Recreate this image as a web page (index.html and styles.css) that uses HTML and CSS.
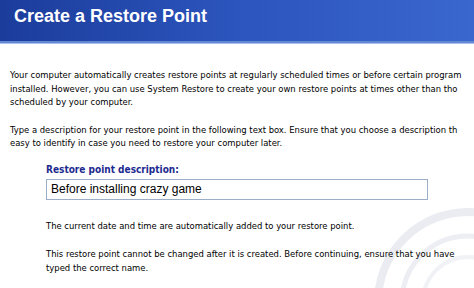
FILE: index.html
```html
<!DOCTYPE html>
<html lang="en">
<head>
    <meta charset="UTF-8">
    <title>Create a Restore Point</title>
    <link rel="stylesheet" href="styles.css">
</head>
<body>
    <div class="header">
        <h1>Create a Restore Point</h1>
    </div>
    <div class="stripe"></div>

    <div class="content">
        <p>Your computer automatically creates restore points at regularly scheduled times or before certain program<br>installed. However, you can use System Restore to create your own restore points at times other than tho<br>scheduled by your computer.</p>
        <p>Type a description for your restore point in the following text box. Ensure that you choose a description th<br>easy to identify in case you need to restore your computer later.</p>

        <div class="form">
            <label class="label">Restore point description:</label>
            <div class="field">Before installing crazy game</div>
            <p>The current date and time are automatically added to your restore point.</p>
            <p>This restore point cannot be changed after it is created. Before continuing, ensure that you have<br>typed the correct name.</p>
        </div>
    </div>

    <!-- watermark -->
    <svg class="watermark" width="100" height="100" viewBox="0 0 100 100">
        <circle cx="94" cy="114" r="90" fill="none" stroke="#eaecf2" stroke-width="8"/>
        <circle cx="94" cy="114" r="66" fill="none" stroke="#edeef4" stroke-width="5"/>
        <circle cx="94" cy="114" r="45" fill="none" stroke="#f1f2f6" stroke-width="4"/>
    </svg>
</body>
</html>
```

FILE: styles.css
```css
body {
    margin: 0;
    background: #fff;
    font-family: "DejaVu Sans Condensed", "DejaVu Sans", Verdana, sans-serif;
    font-stretch: condensed;
    color: #000;
    overflow: hidden;
    position: relative;
    height: 288px;
}

.header {
    height: 41px;
    background: linear-gradient(to right, #1b3c9b, #2c55bd 50%, #3a67cd);
    display: flex;
    align-items: center;
    padding-left: 14px;
}

h1 {
    margin: 0 0 8px 0;
    color: #fff;
    font-family: "Liberation Sans", Arial, sans-serif;
    font-stretch: normal;
    font-size: 18px;
    font-weight: bold;
}

.stripe {
    height: 2px;
    background: #6288d5;
    border-bottom: 1px solid #a9c1ec;
}

.content {
    padding: 24px 0 0 10px;
    font-size: 9.4px;
    white-space: nowrap;
    position: relative;
    z-index: 1;
}

.content p {
    margin: 0 0 14px 0;
    line-height: 13.5px;
}

.form {
    padding-left: 36px;
}

.label {
    display: block;
    color: #1c2a8e;
    font-weight: bold;
    font-size: 10px;
}

.field {
    width: 376px;
    height: 19px;
    border: 1px solid #9aaec8;
    margin: 4px 0 19px 0;
    padding-left: 4px;
    font-family: "Liberation Sans", Arial, sans-serif;
    font-stretch: normal;
    font-size: 12px;
    line-height: 19px;
}

.form p:last-child {
    margin-top: 15px;
}

.watermark {
    position: absolute;
    right: 0;
    bottom: 0;
    z-index: 0;
}
```
